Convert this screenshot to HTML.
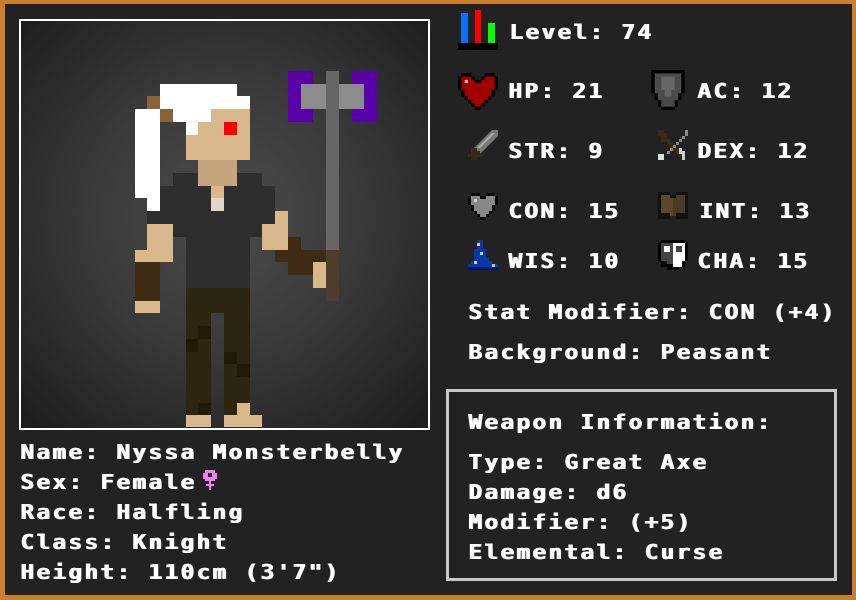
<!DOCTYPE html>
<html><head><meta charset="utf-8"><style>
*{margin:0;padding:0;box-sizing:border-box}
body{width:856px;height:600px;background:#222;overflow:hidden;position:relative;font-family:"DejaVu Sans Mono","Liberation Mono",monospace;font-weight:bold;color:#fff}
#frame{position:absolute;left:0;top:0;width:856px;height:600px;border:5px solid #c8802e;border-top-width:4px;border-right-width:4px}
.t{position:absolute;font-size:20px;letter-spacing:2px;line-height:20px;white-space:pre;text-shadow:1px 0 0 #fff;transform:scaleX(1.14);transform-origin:0 0}
#portrait{position:absolute;left:19px;top:19px;width:411px;height:411px;border:2px solid #fff;background:radial-gradient(circle at 50% 48%,#4c4c4c 0%,#3a3a3a 45%,#1c1c1c 100%);overflow:hidden}
.p{position:absolute}
#wbox{position:absolute;left:446px;top:389px;width:391px;height:192px;border:3px solid #c8c8c8}
</style></head><body>
<div id="frame"></div>
<div id="portrait"></div>
<div style="position:absolute;left:0;top:0">
<div class="p" style="left:160px;top:84px;width:77px;height:12px;background:#fff"></div>
<div class="p" style="left:160px;top:96px;width:90px;height:13px;background:#fff"></div>
<div class="p" style="left:147px;top:96px;width:13px;height:13px;background:#8a6236"></div>
<div class="p" style="left:135px;top:109px;width:25px;height:89px;background:#fff"></div>
<div class="p" style="left:147px;top:198px;width:13px;height:13px;background:#fff"></div>
<div class="p" style="left:160px;top:109px;width:13px;height:13px;background:#8a6236"></div>
<div class="p" style="left:173px;top:109px;width:38px;height:13px;background:#fff"></div>
<div class="p" style="left:186px;top:122px;width:12px;height:13px;background:#fff"></div>
<div class="p" style="left:211px;top:109px;width:39px;height:13px;background:#d9b88c"></div>
<div class="p" style="left:198px;top:122px;width:52px;height:13px;background:#d9b88c"></div>
<div class="p" style="left:186px;top:135px;width:64px;height:25px;background:#d9b88c"></div>
<div class="p" style="left:224px;top:122px;width:13px;height:13px;background:#f00"></div>
<div class="p" style="left:198px;top:160px;width:39px;height:26px;background:#c4a47c"></div>
<div class="p" style="left:173px;top:173px;width:89px;height:13px;background:#2e2e2e"></div>
<div class="p" style="left:198px;top:173px;width:39px;height:13px;background:#c4a47c"></div>
<div class="p" style="left:160px;top:186px;width:115px;height:38px;background:#2e2e2e"></div>
<div class="p" style="left:147px;top:211px;width:13px;height:13px;background:#2e2e2e"></div>
<div class="p" style="left:173px;top:224px;width:89px;height:13px;background:#2e2e2e"></div>
<div class="p" style="left:186px;top:237px;width:64px;height:51px;background:#2e2e2e"></div>
<div class="p" style="left:211px;top:186px;width:13px;height:12px;background:#d9b88c"></div>
<div class="p" style="left:211px;top:198px;width:13px;height:13px;background:#e0d8c8"></div>
<div class="p" style="left:147px;top:224px;width:26px;height:26px;background:#d9b88c"></div>
<div class="p" style="left:135px;top:250px;width:38px;height:12px;background:#d9b88c"></div>
<div class="p" style="left:135px;top:262px;width:25px;height:39px;background:#3f2a14"></div>
<div class="p" style="left:135px;top:301px;width:25px;height:12px;background:#d9b88c"></div>
<div class="p" style="left:275px;top:211px;width:13px;height:13px;background:#d9b88c"></div>
<div class="p" style="left:262px;top:224px;width:26px;height:26px;background:#d9b88c"></div>
<div class="p" style="left:288px;top:237px;width:13px;height:13px;background:#3f2a14"></div>
<div class="p" style="left:275px;top:250px;width:51px;height:12px;background:#3f2a14"></div>
<div class="p" style="left:288px;top:262px;width:25px;height:13px;background:#3f2a14"></div>
<div class="p" style="left:313px;top:262px;width:13px;height:26px;background:#d9b88c"></div>
<div class="p" style="left:288px;top:71px;width:25px;height:51px;background:#5a00a8"></div>
<div class="p" style="left:352px;top:71px;width:25px;height:51px;background:#5a00a8"></div>
<div class="p" style="left:301px;top:84px;width:63px;height:25px;background:#8c8c8c"></div>
<div class="p" style="left:326px;top:71px;width:13px;height:179px;background:#666"></div>
<div class="p" style="left:326px;top:250px;width:13px;height:51px;background:#4e3d2c"></div>
<div class="p" style="left:186px;top:288px;width:64px;height:25px;background:#2c2610"></div>
<div class="p" style="left:186px;top:313px;width:25px;height:102px;background:#2c2610"></div>
<div class="p" style="left:224px;top:313px;width:26px;height:90px;background:#2c2610"></div>
<div class="p" style="left:224px;top:403px;width:13px;height:12px;background:#2c2610"></div>
<div class="p" style="left:198px;top:326px;width:13px;height:13px;background:#221a08"></div>
<div class="p" style="left:186px;top:339px;width:12px;height:13px;background:#221a08"></div>
<div class="p" style="left:224px;top:352px;width:13px;height:12px;background:#221a08"></div>
<div class="p" style="left:237px;top:364px;width:13px;height:13px;background:#221a08"></div>
<div class="p" style="left:198px;top:403px;width:13px;height:12px;background:#221a08"></div>
<div class="p" style="left:186px;top:415px;width:25px;height:12px;background:#d9b88c"></div>
<div class="p" style="left:224px;top:415px;width:38px;height:12px;background:#d9b88c"></div>
<div class="p" style="left:237px;top:403px;width:13px;height:12px;background:#d9b88c"></div>
</div>

<div class="t" style="left:20px;top:442px">Name: Nyssa Monsterbelly</div>
<div class="t" style="left:20px;top:472px">Sex: Female</div>
<svg style="position:absolute;left:203px;top:470px" width="14" height="20" viewBox="0 0 14 20"><path d="M2 0h10v3h2v6h-2v2H8v3h3v2H8v4H6v-4H3v-2h3v-3H2V9H0V3h2z" fill="#f080f0"/><rect x="5" y="3" width="4" height="4" fill="#222"/></svg>
<div class="t" style="left:20px;top:502px">Race: Halfling</div>
<div class="t" style="left:20px;top:532px">Class: Knight</div>
<div class="t" style="left:20px;top:562px">Height: 110cm (3'7")</div>

<div class="p" style="left:461px;top:13px;width:7px;height:30px;background:#0a70ff"></div>
<div class="p" style="left:475px;top:10px;width:6px;height:33px;background:#f00"></div>
<div class="p" style="left:488px;top:23px;width:7px;height:20px;background:#0f0"></div>
<div class="p" style="left:458px;top:43px;width:40px;height:7px;background:#000"></div>

<svg style="position:absolute;left:458px;top:73px" width="40" height="37" viewBox="0 0 12 11"><path d="M1 0h3v1h1v1h2V1h1V0h3v1h1v4h-1v2h-1v1H9v1H8v1H7v1H5v-1H4V9H3V8H2V7H1V5H0V1h1z" fill="#000"/><path d="M1 1h3v1h1v1h2V2h1V1h3v4h-1v2H9v1H8v1H7v1H5V9H4V8H3V7H2V5H1z" fill="#a00000"/><rect x="2" y="2" width="1" height="1" fill="#f3b0b0"/></svg>
<svg style="position:absolute;left:651px;top:70px" width="34" height="40" viewBox="0 0 10 12"><path d="M0 0h10v7H9v2H8v2H7v1H3v-1H2V9H1V7H0z" fill="#000"/><path d="M1 1h8v6H8v2H7v2H3V9H2V7H1z" fill="#4a4a4a"/><path d="M3 2h4v4H6v2H4V6H3z" fill="#666"/></svg>
<svg style="position:absolute;left:468px;top:130px" width="30" height="30" viewBox="0 0 10 10"><path d="M8 0h2v2L4 8H2V6z" fill="#777"/><path d="M3 6l5-5h1L4 6z" fill="#aaa"/><path d="M1 6h2v1h1v1h1v1H3v1H1V9H0V8h1z" fill="#3a2a18"/></svg>
<svg style="position:absolute;left:658px;top:130px" width="30" height="30" viewBox="0 0 10 10"><path d="M0 0h2v1h1v2h1v1h1v1h1v1h1v1h1v1h1v2H8V9H7V8H6V7H5V6H4V5H3V4H1V2H0z" fill="#3a2a18"/><path d="M9 0h1v2H9v1H8v1H7v1H6v1H5v1H4v1H3V7h1V6h1V5h1V4h1V3h1V2h1z" fill="#888"/><path d="M7 6h1v1h1v3H8V8H7z" fill="#ccc"/><rect x="0" y="8" width="2" height="2" fill="#ddd"/></svg>
<svg style="position:absolute;left:468px;top:193px" width="30" height="27" viewBox="0 0 10 9"><path d="M1 0h3v1h2V0h3v1h1v3H9v2H8v1H7v1H6v1H4V8H3V7H2V6H1V4H0V1h1z" fill="#000"/><path d="M1 1h3v1h2V1h3v3H8v2H7v1H6v1H4V7H3V6H2V4H1z" fill="#888"/><rect x="2" y="2" width="1" height="1" fill="#ccc"/></svg>
<svg style="position:absolute;left:658px;top:192px" width="30" height="27" viewBox="0 0 10 9"><path d="M0 0h4v1h2V0h4v9H6V8H4v1H0z" fill="#111"/><path d="M1 1h3v1h1v6H4V7H1z" fill="#5a4828"/><path d="M5 2h1V1h3v6H6v1H5z" fill="#4a3a20"/></svg>
<svg style="position:absolute;left:468px;top:240px" width="30" height="30" viewBox="0 0 10 10"><path d="M3 0h2v3h1v3h1v1h1v1h2v2H0V8h1V7h1V3h1z" fill="#0838a8"/><rect x="0" y="9" width="10" height="1" fill="#001870"/><rect x="3" y="1" width="1" height="1" fill="#d8c880"/><rect x="4" y="4" width="1" height="1" fill="#d8c880"/><rect x="2" y="7" width="1" height="1" fill="#d8c880"/><rect x="8" y="8" width="1" height="1" fill="#d8c880"/></svg>
<svg style="position:absolute;left:658px;top:240px" width="30" height="30" viewBox="0 0 10 10"><path d="M1 0h8v1h1v6H9v2H7v1H3V9H1V7H0V1h1z" fill="#000"/><path d="M1 1h4v7H3V7H1z" fill="#444"/><path d="M5 1h4v6H8v2H5z" fill="#fff"/><rect x="2" y="2" width="2" height="2" fill="#fff"/><rect x="6" y="2" width="2" height="2" fill="#444"/></svg>

<div class="t" style="left:509px;top:22px">Level: 74</div>
<div class="t" style="left:508px;top:81px">HP: 21</div>
<div class="t" style="left:697px;top:81px">AC: 12</div>
<div class="t" style="left:508px;top:141px">STR: 9</div>
<div class="t" style="left:697px;top:141px">DEX: 12</div>
<div class="t" style="left:508px;top:201px">CON: 15</div>
<div class="t" style="left:699px;top:201px">INT: 13</div>
<div class="t" style="left:508px;top:251px">WIS: 10</div>
<div class="t" style="left:697px;top:251px">CHA: 15</div>
<div class="t" style="left:468px;top:302px">Stat Modifier: CON (+4)</div>
<div class="t" style="left:468px;top:342px">Background: Peasant</div>

<div id="wbox"></div>
<div class="t" style="left:468px;top:412px">Weapon Information:</div>
<div class="t" style="left:468px;top:452px">Type: Great Axe</div>
<div class="t" style="left:468px;top:482px">Damage: d6</div>
<div class="t" style="left:468px;top:512px">Modifier: (+5)</div>
<div class="t" style="left:468px;top:542px">Elemental: Curse</div>
</body></html>
